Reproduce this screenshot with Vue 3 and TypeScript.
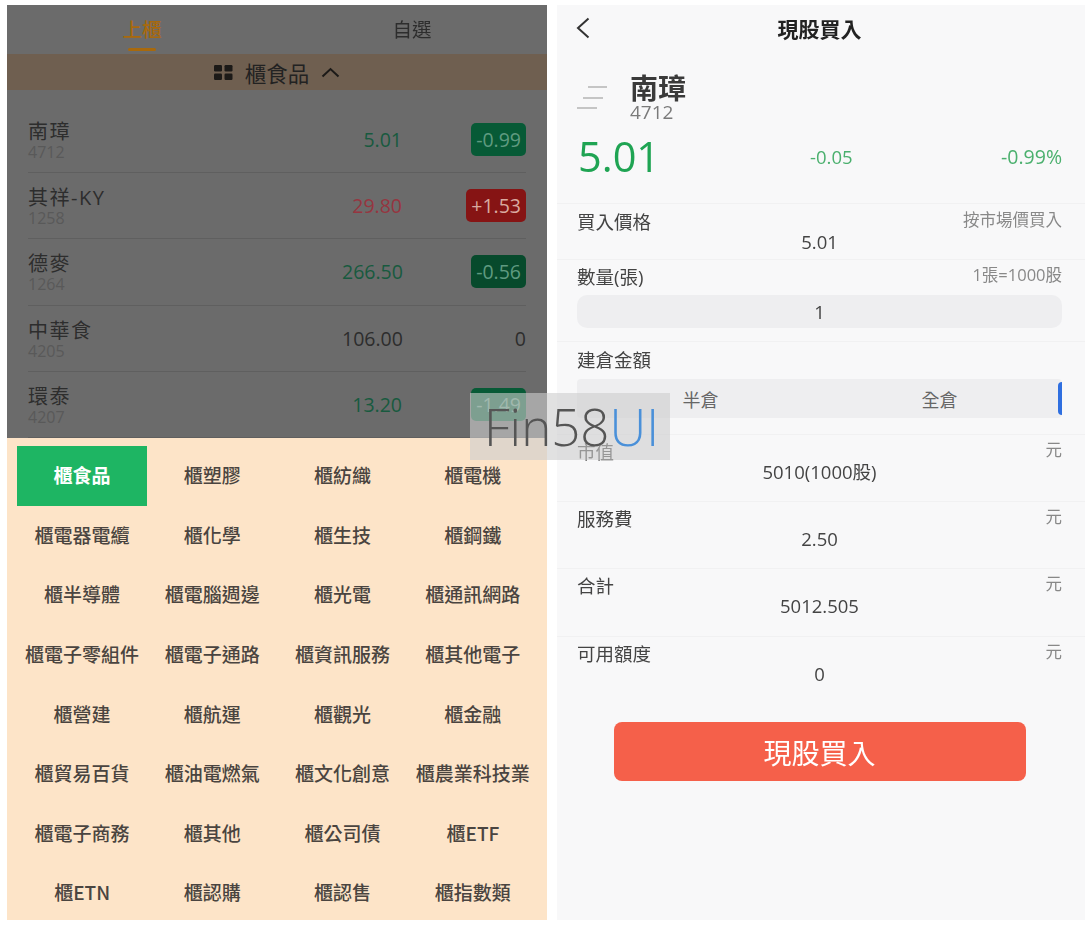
<template>
  <div class="page">
    <section class="market">
      <div class="tabs">
        <div class="tab tab--on">上櫃<i class="tab__line"></i></div>
        <div class="tab">自選</div>
      </div>
      <div class="cat-bar">
        <svg class="cat-bar__grid" width="19" height="15" viewBox="0 0 19 15">
          <rect x="0" y="0" width="8" height="6.5" rx="1.2" />
          <rect x="10.5" y="0" width="8" height="6.5" rx="1.2" />
          <rect x="0" y="8.5" width="8" height="6.5" rx="1.2" />
          <rect x="10.5" y="8.5" width="8" height="6.5" rx="1.2" />
        </svg>
        <span>櫃食品</span>
        <svg class="cat-bar__arrow" width="19" height="11" viewBox="0 0 19 11">
          <path d="M1.5 9.5 L9.5 2 L17.5 9.5" />
        </svg>
      </div>
      <div class="stocks">
        <div v-for="s in stocks" :key="s.code" class="stock">
          <div class="stock__name">
            <div>{{ s.name }}</div>
            <small>{{ s.code }}</small>
          </div>
          <div class="stock__price" :class="s.tone">{{ s.price }}</div>
          <div class="stock__chg">
            <span :class="s.tone === 'flat' ? 'chip-flat' : 'chip chip--' + s.tone">{{ s.chg }}</span>
          </div>
        </div>
      </div>
      <div class="sheet">
        <div
          v-for="(c, i) in categories"
          :key="c"
          class="sheet__item"
          :class="{ 'sheet__item--on': i === 0 }"
        >{{ c }}</div>
      </div>
    </section>

    <section class="order">
      <header class="order__head">
        <svg class="order__back" width="14" height="22" viewBox="0 0 14 22">
          <path d="M12.5 1.5 L2 11 L12.5 20.5" />
        </svg>
        <h1>現股買入</h1>
      </header>
      <div class="quote">
        <div class="quote__title">
          <svg class="quote__icon" width="34" height="26" viewBox="0 0 34 26">
            <path d="M11 3h19M6 14h20M0 24h20" />
          </svg>
          <div>
            <div class="quote__name">南璋</div>
            <div class="quote__code">4712</div>
          </div>
        </div>
        <div class="quote__nums">
          <span class="quote__price">5.01</span>
          <span class="quote__chg">-0.05</span>
          <span class="quote__pct">-0.99%</span>
        </div>
      </div>

      <div class="field field--price">
        <div class="field__top"><span>買入價格</span><em>按市場價買入</em></div>
        <div class="field__val">5.01</div>
      </div>
      <div class="field field--qty">
        <div class="field__top"><span>數量(張)</span><em>1張=1000股</em></div>
        <div class="qty">1</div>
      </div>
      <div class="field field--amount">
        <div class="field__top"><span>建倉金額</span></div>
        <div class="ratio">
          <span>半倉</span>
          <span>全倉</span>
          <i class="ratio__thumb"></i>
        </div>
      </div>
      <div v-for="r in summary" :key="r.label" class="field field--sum">
        <div class="field__top"><span>{{ r.label }}</span><em>元</em></div>
        <div class="field__val">{{ r.value }}</div>
      </div>

      <button class="buy" type="button">現股買入</button>
    </section>

    <div class="mark">Fin58<b>UI</b></div>
  </div>
</template>

<script setup lang="ts">
type Tone = 'down' | 'up' | 'flat'

interface Stock {
  name: string
  code: string
  price: string
  chg: string
  tone: Tone
}

const stocks: Stock[] = [
  { name: '南璋', code: '4712', price: '5.01', chg: '-0.99', tone: 'down' },
  { name: '其祥-KY', code: '1258', price: '29.80', chg: '+1.53', tone: 'up' },
  { name: '德麥', code: '1264', price: '266.50', chg: '-0.56', tone: 'down' },
  { name: '中華食', code: '4205', price: '106.00', chg: '0', tone: 'flat' },
  { name: '環泰', code: '4207', price: '13.20', chg: '-1.49', tone: 'down' },
]

const categories: string[] = [
  '櫃食品', '櫃塑膠', '櫃紡織', '櫃電機',
  '櫃電器電纜', '櫃化學', '櫃生技', '櫃鋼鐵',
  '櫃半導體', '櫃電腦週邊', '櫃光電', '櫃通訊網路',
  '櫃電子零組件', '櫃電子通路', '櫃資訊服務', '櫃其他電子',
  '櫃營建', '櫃航運', '櫃觀光', '櫃金融',
  '櫃貿易百貨', '櫃油電燃氣', '櫃文化創意', '櫃農業科技業',
  '櫃電子商務', '櫃其他', '櫃公司債', '櫃ETF',
  '櫃ETN', '櫃認購', '櫃認售', '櫃指數類',
]

const summary = [
  { label: '市值', value: '5010(1000股)' },
  { label: '服務費', value: '2.50' },
  { label: '合計', value: '5012.505' },
  { label: '可用額度', value: '0' },
]
</script>

<style>
html,
body {
  margin: 0;
  background: #fff;
}
</style>

<style scoped>
.page {
  position: relative;
  display: flex;
  gap: 10px;
  width: 1090px;
  height: 928px;
  box-sizing: border-box;
  padding: 5px 5px 8px 7px;
  overflow: hidden;
  font-family: "Open Sans", "Noto Sans CJK TC", sans-serif;
  color: #333;
  filter: blur(0.4px);
}

.market {
  display: flex;
  flex-direction: column;
  width: 540px;
  background: #6b6b6b;
  color: #2d2d2d;
}

.tabs {
  display: flex;
  height: 49px;
  flex: none;
}

.tab {
  position: relative;
  flex: 1;
  padding-top: 12px;
  font-size: 19.5px;
  line-height: 25px;
  text-align: center;
}

.tab:first-child {
  flex: 0 0 270px;
}

.tab--on {
  color: #a8690c;
  font-weight: 500;
}

.tab__line {
  position: absolute;
  left: 121px;
  bottom: 3px;
  width: 28px;
  height: 3px;
  border-radius: 2px;
  background: #a8690c;
}

.cat-bar {
  display: flex;
  align-items: center;
  justify-content: center;
  flex: none;
  gap: 12px;
  height: 36px;
  background: #6f5f50;
  font-size: 21.5px;
  color: #222;
}

.cat-bar__grid rect {
  fill: #1c1a18;
}

.cat-bar__arrow path {
  fill: none;
  stroke: #1c1a18;
  stroke-width: 2;
}

.stocks {
  flex: 1;
  min-height: 0;
  overflow: hidden;
  padding: 16.5px 21px 0;
}

.stock {
  display: flex;
  align-items: center;
  height: 66.4px;
  box-sizing: border-box;
  border-bottom: 1px solid #5f5f5f;
}

.stock__name {
  flex: 1;
  font-size: 20px;
  line-height: 25px;
  letter-spacing: 1.5px;
}

.stock__name small {
  display: block;
  font-size: 16px;
  line-height: 16px;
  letter-spacing: 0;
  color: #595959;
}

.stock__price {
  width: 60px;
  margin-right: 62px;
  font-size: 19.5px;
  text-align: right;
  white-space: nowrap;
}

.down {
  color: #185a3f;
}

.up {
  color: #963540;
}

.flat {
  color: #2d2d2d;
}

.stock__chg {
  width: 62px;
  text-align: right;
  font-size: 19.5px;
}

.chip {
  display: inline-block;
  min-width: 40px;
  height: 33px;
  padding: 0 5px;
  border-radius: 5px;
  line-height: 33px;
  white-space: nowrap;
  color: #5f9a80;
}

.chip--down {
  background: #075a36;
}

.chip--up {
  background: #861414;
  color: #d9aaa0;
}

.chip-flat {
  color: #2d2d2d;
}

.stock:nth-child(3) .chip--down {
  background: #074a2c;
}

.sheet {
  flex: none;
  display: grid;
  grid-template-columns: repeat(4, 130.25px);
  grid-auto-rows: 59.6px;
  height: 482px;
  box-sizing: border-box;
  padding: 8px 9px 0 10px;
  background: #fde4c8;
}

.sheet__item {
  display: flex;
  align-items: center;
  justify-content: center;
  padding-bottom: 2px;
  box-sizing: border-box;
  font-family: "Noto Sans CJK TC", sans-serif;
  font-size: 19px;
  font-weight: 500;
  color: #4a4440;
  white-space: nowrap;
}

.sheet__item--on {
  background: #1eb563;
  color: #fff;
  font-weight: 700;
}

.order {
  display: flex;
  flex-direction: column;
  width: 528px;
  background: #f8f8f9;
}

.order__head {
  position: relative;
  display: flex;
  align-items: center;
  justify-content: center;
  height: 48px;
  flex: none;
  padding: 0 3px 2px 0;
  box-sizing: border-box;
}

.order__back {
  position: absolute;
  left: 19px;
  top: 12px;
}

.order__back path {
  fill: none;
  stroke: #333;
  stroke-width: 2;
}

.order__head h1 {
  margin: 0;
  font-size: 21px;
  font-weight: 700;
  color: #222;
}

.quote {
  height: 151px;
  flex: none;
  box-sizing: border-box;
  padding: 20px 23px 0 20px;
  border-bottom: 1px solid #f1f1f2;
}

.quote__title {
  display: flex;
  align-items: center;
  gap: 19px;
}

.quote__icon path {
  fill: none;
  stroke: #b4b4b4;
  stroke-width: 1.5;
}

.quote__name {
  font-size: 28px;
  line-height: 30px;
  font-weight: 700;
  color: #3a3a3a;
}

.quote__code {
  font-size: 19px;
  line-height: 18px;
  color: #7a7a7a;
}

.quote__nums {
  display: flex;
  align-items: center;
  height: 54px;
  margin-top: 8px;
  font-size: 18.5px;
  color: #4bb06e;
}

.quote__price {
  width: 232px;
  padding-left: 1px;
  font-size: 41.5px;
  color: #1fa453;
}

.quote__chg {
  flex: 1;
}

.quote__pct {
  font-size: 19.5px;
  text-align: right;
}

.field {
  flex: none;
  box-sizing: border-box;
  padding: 0 23px 0 20px;
  border-bottom: 1px solid #f1f1f2;
}

.field:last-of-type {
  border-bottom: 0;
}

.field--price {
  height: 56px;
  padding-top: 7px;
}

.field--qty {
  height: 82px;
  padding-top: 6px;
}

.field--amount {
  height: 92.5px;
  padding-top: 7px;
}

.field--sum {
  height: 67.4px;
  padding-top: 6px;
}

.field__top {
  display: flex;
  justify-content: space-between;
  font-size: 18.5px;
  line-height: 22px;
  color: #444;
}

.field__top em {
  font-style: normal;
  font-size: 16.5px;
  line-height: 18px;
  color: #888;
}

.field__val {
  margin-top: -2px;
  font-size: 18.5px;
  line-height: 22px;
  text-align: center;
  color: #444;
}

.qty {
  height: 33px;
  margin-top: 7px;
  border-radius: 10px;
  background: #eeeef0;
  font-size: 18.5px;
  line-height: 33px;
  text-align: center;
  color: #444;
}

.ratio {
  position: relative;
  display: grid;
  grid-template-columns: 239px 239px;
  align-items: center;
  height: 39px;
  margin-top: 8px;
  padding-left: 4px;
  border-radius: 4px;
  background: #eeeef0;
  font-size: 18px;
  color: #666;
  text-align: center;
}

.ratio__thumb {
  position: absolute;
  right: 0;
  top: 3px;
  width: 4px;
  height: 33px;
  border-radius: 4px 0 0 4px;
  background: #2f6fe0;
}

.buy {
  flex: none;
  align-self: center;
  width: 412px;
  height: 59px;
  margin: 18px 3px 0 0;
  border: 0;
  border-radius: 8px;
  background: #f5604a;
  font-family: inherit;
  font-size: 28px;
  color: #fff;
}

.mark {
  position: absolute;
  left: 470px;
  top: 393px;
  width: 200px;
  height: 67px;
  box-sizing: border-box;
  padding-left: 14px;
  background: rgba(205, 205, 205, 0.6);
  font-family: "Open Sans", sans-serif;
  font-size: 51px;
  font-weight: 300;
  line-height: 67px;
  color: #555;
  white-space: nowrap;
}

.mark b {
  font-weight: 300;
  color: #4a90d9;
}
</style>
